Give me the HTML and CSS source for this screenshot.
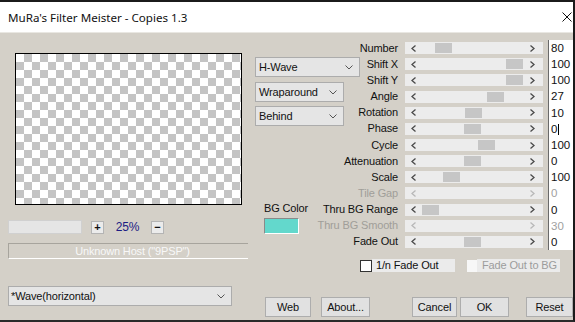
FILE: index.html
```html
<!DOCTYPE html>
<html>
<head>
<meta charset="utf-8">
<title>MuRa's Filter Meister - Copies 1.3</title>
<link rel="stylesheet" href="styles.css">
</head>
<body>
<div class="window">
  <div class="titlebar">
    <span class="title">MuRa's Filter Meister - Copies 1.3</span>
    <svg class="close" width="10" height="10" viewBox="0 0 10 10"><path d="M0.5 0.5 L9.5 9.5 M9.5 0.5 L0.5 9.5" stroke="#111" stroke-width="1" fill="none"/></svg>
  </div>
  <div class="content">
    <div class="left">
      <div class="preview"></div>
      <div class="zoomrow">
        <div class="zfield"></div>
        <div class="zbtn zplus">+</div>
        <div class="zval">25%</div>
        <div class="zbtn">&minus;</div>
      </div>
      <div class="host">Unknown Host ("9PSP")</div>
      <div class="dd preset"><span>*Wave(horizontal)</span><svg width="8" height="5" viewBox="0 0 8 5"><polyline points="0.5,0.5 4,4 7.5,0.5" fill="none" stroke="#555" stroke-width="1"/></svg></div>
    </div>
    <div class="right">
      <div class="params">
        <div class="mid">
          <div class="dd hwave"><span>H-Wave</span><svg width="8" height="5" viewBox="0 0 8 5"><polyline points="0.5,0.5 4,4 7.5,0.5" fill="none" stroke="#555" stroke-width="1"/></svg></div>
          <div class="dd wrap"><span>Wraparound</span><svg width="8" height="5" viewBox="0 0 8 5"><polyline points="0.5,0.5 4,4 7.5,0.5" fill="none" stroke="#555" stroke-width="1"/></svg></div>
          <div class="dd behind"><span>Behind</span><svg width="8" height="5" viewBox="0 0 8 5"><polyline points="0.5,0.5 4,4 7.5,0.5" fill="none" stroke="#555" stroke-width="1"/></svg></div>
          <div class="bglabel">BG Color</div>
          <div class="swatch"></div>
        </div>

        <div class="lbl">Number</div>
        <div class="track"><svg class="arr" width="5" height="7"><polyline points="4.5,0.5 1,3.5 4.5,6.5"/></svg><div class="thumb" style="left:30px"></div><svg class="arr" width="5" height="7"><polyline points="0.5,0.5 4,3.5 0.5,6.5"/></svg></div>
        <div class="field">80</div>

        <div class="lbl">Shift X</div>
        <div class="track"><svg class="arr" width="5" height="7"><polyline points="4.5,0.5 1,3.5 4.5,6.5"/></svg><div class="thumb" style="left:101px"></div><svg class="arr" width="5" height="7"><polyline points="0.5,0.5 4,3.5 0.5,6.5"/></svg></div>
        <div class="field">100</div>

        <div class="lbl">Shift Y</div>
        <div class="track"><svg class="arr" width="5" height="7"><polyline points="4.5,0.5 1,3.5 4.5,6.5"/></svg><div class="thumb" style="left:101px"></div><svg class="arr" width="5" height="7"><polyline points="0.5,0.5 4,3.5 0.5,6.5"/></svg></div>
        <div class="field">100</div>

        <div class="lbl">Angle</div>
        <div class="track"><svg class="arr" width="5" height="7"><polyline points="4.5,0.5 1,3.5 4.5,6.5"/></svg><div class="thumb" style="left:82px"></div><svg class="arr" width="5" height="7"><polyline points="0.5,0.5 4,3.5 0.5,6.5"/></svg></div>
        <div class="field">27</div>

        <div class="lbl">Rotation</div>
        <div class="track"><svg class="arr" width="5" height="7"><polyline points="4.5,0.5 1,3.5 4.5,6.5"/></svg><div class="thumb" style="left:60px"></div><svg class="arr" width="5" height="7"><polyline points="0.5,0.5 4,3.5 0.5,6.5"/></svg></div>
        <div class="field">10</div>

        <div class="lbl">Phase</div>
        <div class="track"><svg class="arr" width="5" height="7"><polyline points="4.5,0.5 1,3.5 4.5,6.5"/></svg><div class="thumb" style="left:59px"></div><svg class="arr" width="5" height="7"><polyline points="0.5,0.5 4,3.5 0.5,6.5"/></svg></div>
        <div class="field">0<span class="caret"></span></div>

        <div class="lbl">Cycle</div>
        <div class="track"><svg class="arr" width="5" height="7"><polyline points="4.5,0.5 1,3.5 4.5,6.5"/></svg><div class="thumb" style="left:73px"></div><svg class="arr" width="5" height="7"><polyline points="0.5,0.5 4,3.5 0.5,6.5"/></svg></div>
        <div class="field">100</div>

        <div class="lbl">Attenuation</div>
        <div class="track"><svg class="arr" width="5" height="7"><polyline points="4.5,0.5 1,3.5 4.5,6.5"/></svg><div class="thumb" style="left:59px"></div><svg class="arr" width="5" height="7"><polyline points="0.5,0.5 4,3.5 0.5,6.5"/></svg></div>
        <div class="field">0</div>

        <div class="lbl">Scale</div>
        <div class="track"><svg class="arr" width="5" height="7"><polyline points="4.5,0.5 1,3.5 4.5,6.5"/></svg><div class="thumb" style="left:38px"></div><svg class="arr" width="5" height="7"><polyline points="0.5,0.5 4,3.5 0.5,6.5"/></svg></div>
        <div class="field">100</div>

        <div class="lbl dis">Tile Gap</div>
        <div class="track dis"><svg class="arr" width="5" height="7"><polyline points="4.5,0.5 1,3.5 4.5,6.5"/></svg><svg class="arr" width="5" height="7"><polyline points="0.5,0.5 4,3.5 0.5,6.5"/></svg></div>
        <div class="field dis">0</div>

        <div class="lbl">Thru BG Range</div>
        <div class="track"><svg class="arr" width="5" height="7"><polyline points="4.5,0.5 1,3.5 4.5,6.5"/></svg><div class="thumb" style="left:17px"></div><svg class="arr" width="5" height="7"><polyline points="0.5,0.5 4,3.5 0.5,6.5"/></svg></div>
        <div class="field">0</div>

        <div class="lbl dis">Thru BG Smooth</div>
        <div class="track dis"><svg class="arr" width="5" height="7"><polyline points="4.5,0.5 1,3.5 4.5,6.5"/></svg><svg class="arr" width="5" height="7"><polyline points="0.5,0.5 4,3.5 0.5,6.5"/></svg></div>
        <div class="field dis">30</div>

        <div class="lbl">Fade Out</div>
        <div class="track"><svg class="arr" width="5" height="7"><polyline points="4.5,0.5 1,3.5 4.5,6.5"/></svg><div class="thumb" style="left:59px"></div><svg class="arr" width="5" height="7"><polyline points="0.5,0.5 4,3.5 0.5,6.5"/></svg></div>
        <div class="field">0</div>
      </div>

      <div class="checks">
        <div class="cb"></div>
        <div class="cblabel">1/n Fade Out</div>
        <div class="cb dis"></div>
        <div class="cblabel dis">Fade Out to BG</div>
      </div>

      <div class="buttons">
        <div class="btn b-web">Web</div>
        <div class="btn b-about">About...</div>
        <div class="btn b-cancel">Cancel</div>
        <div class="btn b-ok">OK</div>
        <div class="btn b-reset">Reset</div>
      </div>
    </div>
  </div>
</div>
</body>
</html>
```

FILE: styles.css
```css
* { box-sizing: border-box; }
html, body { margin: 0; padding: 0; }
body {
  width: 575px;
  height: 322px;
  overflow: hidden;
  font-family: "Liberation Sans", Arial, sans-serif;
  font-size: 11px;
  letter-spacing: -0.15px;
  color: #111;
  background: #d4d0c8;
}
.window {
  height: 322px;
  display: flex;
  flex-direction: column;
  border-top: 2px solid #1b1b1b;
  border-right: 2px solid #1b1b1b;
  border-bottom: 2px solid #2a2a2a;
}
.titlebar {
  height: 30px;
  flex: none;
  background: #fff;
  display: flex;
  align-items: center;
  justify-content: space-between;
  padding-left: 8px;
  padding-right: 1px;
}
.title {
  font-family: "Noto Sans", sans-serif;
  font-size: 11.6px;
  letter-spacing: 0;
  color: #111;
}
.content {
  flex: 1;
  display: flex;
  background: #d4d0c8;
  border-top: 1px solid #e9e7e2;
}
.left {
  width: 250px;
  flex: none;
  display: flex;
  flex-direction: column;
  padding-top: 20px;
}
.preview {
  margin-left: 15px;
  width: 227px;
  height: 152px;
  border: 1px solid #000;
  background-color: #fff;
  background-image: conic-gradient(#c4c4c4 0 25%, #fff 0 50%, #c4c4c4 0 75%, #fff 0);
  background-size: 16px 16px;
}
.zoomrow {
  display: flex;
  align-items: center;
  margin-top: 15px;
  padding-left: 8px;
  height: 14px;
}
.zfield {
  width: 74px;
  height: 14px;
  background: #e5e5e5;
  border: 1px solid #d0d0d0;
}
.zbtn {
  width: 13px;
  height: 13px;
  border: 1px solid #b4b4b4;
  background: #ebebeb;
  font-weight: bold;
  font-size: 11px;
  line-height: 11px;
  text-align: center;
}
.zplus { margin-left: 9px; }
.zval {
  width: 47px;
  text-align: center;
  color: #1c1c84;
  font-size: 12px;
}
.host {
  margin: 9px 0 0 8px;
  width: 240px;
  height: 16px;
  border-top: 1px solid #a7a49d;
  border-left: 1px solid #a7a49d;
  border-bottom: 1px solid #fff;
  color: #f8f8f8;
  text-align: center;
  line-height: 14px;
  padding-left: 8px;
}
.dd {
  height: 20px;
  flex: none;
  background: #e5e5e5;
  border: 1px solid #acacac;
  display: flex;
  align-items: center;
  justify-content: space-between;
  padding: 0 6px 0 3px;
}
.preset {
  margin: 27px 0 0 8px;
  width: 224px;
  padding-left: 2px;
}
.right {
  flex: 1;
  display: flex;
  flex-direction: column;
}
.params {
  margin-top: 7px;
  padding-left: 5px;
  display: grid;
  grid-template-columns: 60px 80px 138px 25px;
  grid-template-rows: repeat(13, 16.17px);
  column-gap: 5px;
}
.mid {
  grid-column: 1;
  grid-row: 1 / span 13;
  display: flex;
  flex-direction: column;
  align-items: flex-start;
}
.hwave { width: 105px; margin-top: 17px; }
.wrap { width: 89px; margin-top: 5px; }
.behind { width: 89px; margin-top: 4px; }
.bglabel {
  margin-top: 76px;
  margin-left: 9px;
  line-height: 13px;
  white-space: nowrap;
}
.swatch {
  margin-top: 3px;
  margin-left: 9px;
  width: 35px;
  height: 16px;
  background: #63d8cc;
  border-top: 1px solid #8a8a8a;
  border-left: 1px solid #8a8a8a;
  border-bottom: 1px solid #fff;
  border-right: 1px solid #fff;
}
.lbl {
  grid-column: 2;
  justify-self: end;
  align-self: center;
  white-space: nowrap;
  padding-right: 2px;
  line-height: 13px;
}
.lbl.dis { color: #a09e99; }
.track {
  grid-column: 3;
  align-self: center;
  height: 12px;
  background: #ececec;
  position: relative;
  display: flex;
  align-items: center;
  justify-content: space-between;
  padding: 0 8px 0 6px;
}
.arr polyline {
  fill: none;
  stroke: #4a4a4a;
  stroke-width: 1.3;
}
.track.dis .arr polyline { stroke: #b8b8b8; }
.thumb {
  position: absolute;
  top: 1px;
  width: 17px;
  height: 10px;
  background: #c6c6c6;
}
.field {
  grid-column: 4;
  background: #fff;
  border-left: 1px solid #6a6a6a;
  padding-left: 2px;
  line-height: 16px;
  font-size: 11.5px;
  letter-spacing: 0;
}
.field.dis { color: #a0a0a0; }
.caret {
  display: inline-block;
  width: 1px;
  height: 11px;
  background: #000;
  vertical-align: -2px;
  margin-left: 1px;
}
.checks {
  margin-top: 9px;
  padding-left: 110px;
  display: flex;
  align-items: center;
  height: 13px;
}
.cb {
  width: 12px;
  height: 12px;
  border: 1px solid #333;
  background: #fff;
}
.cblabel {
  background: #ebebeb;
  height: 13px;
  line-height: 13px;
  width: 83px;
  padding-left: 4px;
  white-space: nowrap;
}
.cb.dis {
  border: none;
  background: #f7f7f7;
  margin-left: 12px;
  width: 10px;
}
.cblabel.dis {
  color: #9c9c9c;
  padding-left: 5px;
}
.buttons {
  margin-top: 25px;
  display: flex;
  height: 20px;
  padding-left: 15px;
}
.btn {
  height: 20px;
  border: 1px solid #adadad;
  background: #e1e1e1;
  display: flex;
  align-items: center;
  justify-content: center;
  white-space: nowrap;
}
.b-web { width: 46px; }
.b-about { width: 49px; margin-left: 10px; }
.b-cancel { width: 45px; margin-left: 42px; }
.b-ok { width: 49px; margin-left: 3px; }
.b-reset { width: 47px; margin-left: 17px; }
```
